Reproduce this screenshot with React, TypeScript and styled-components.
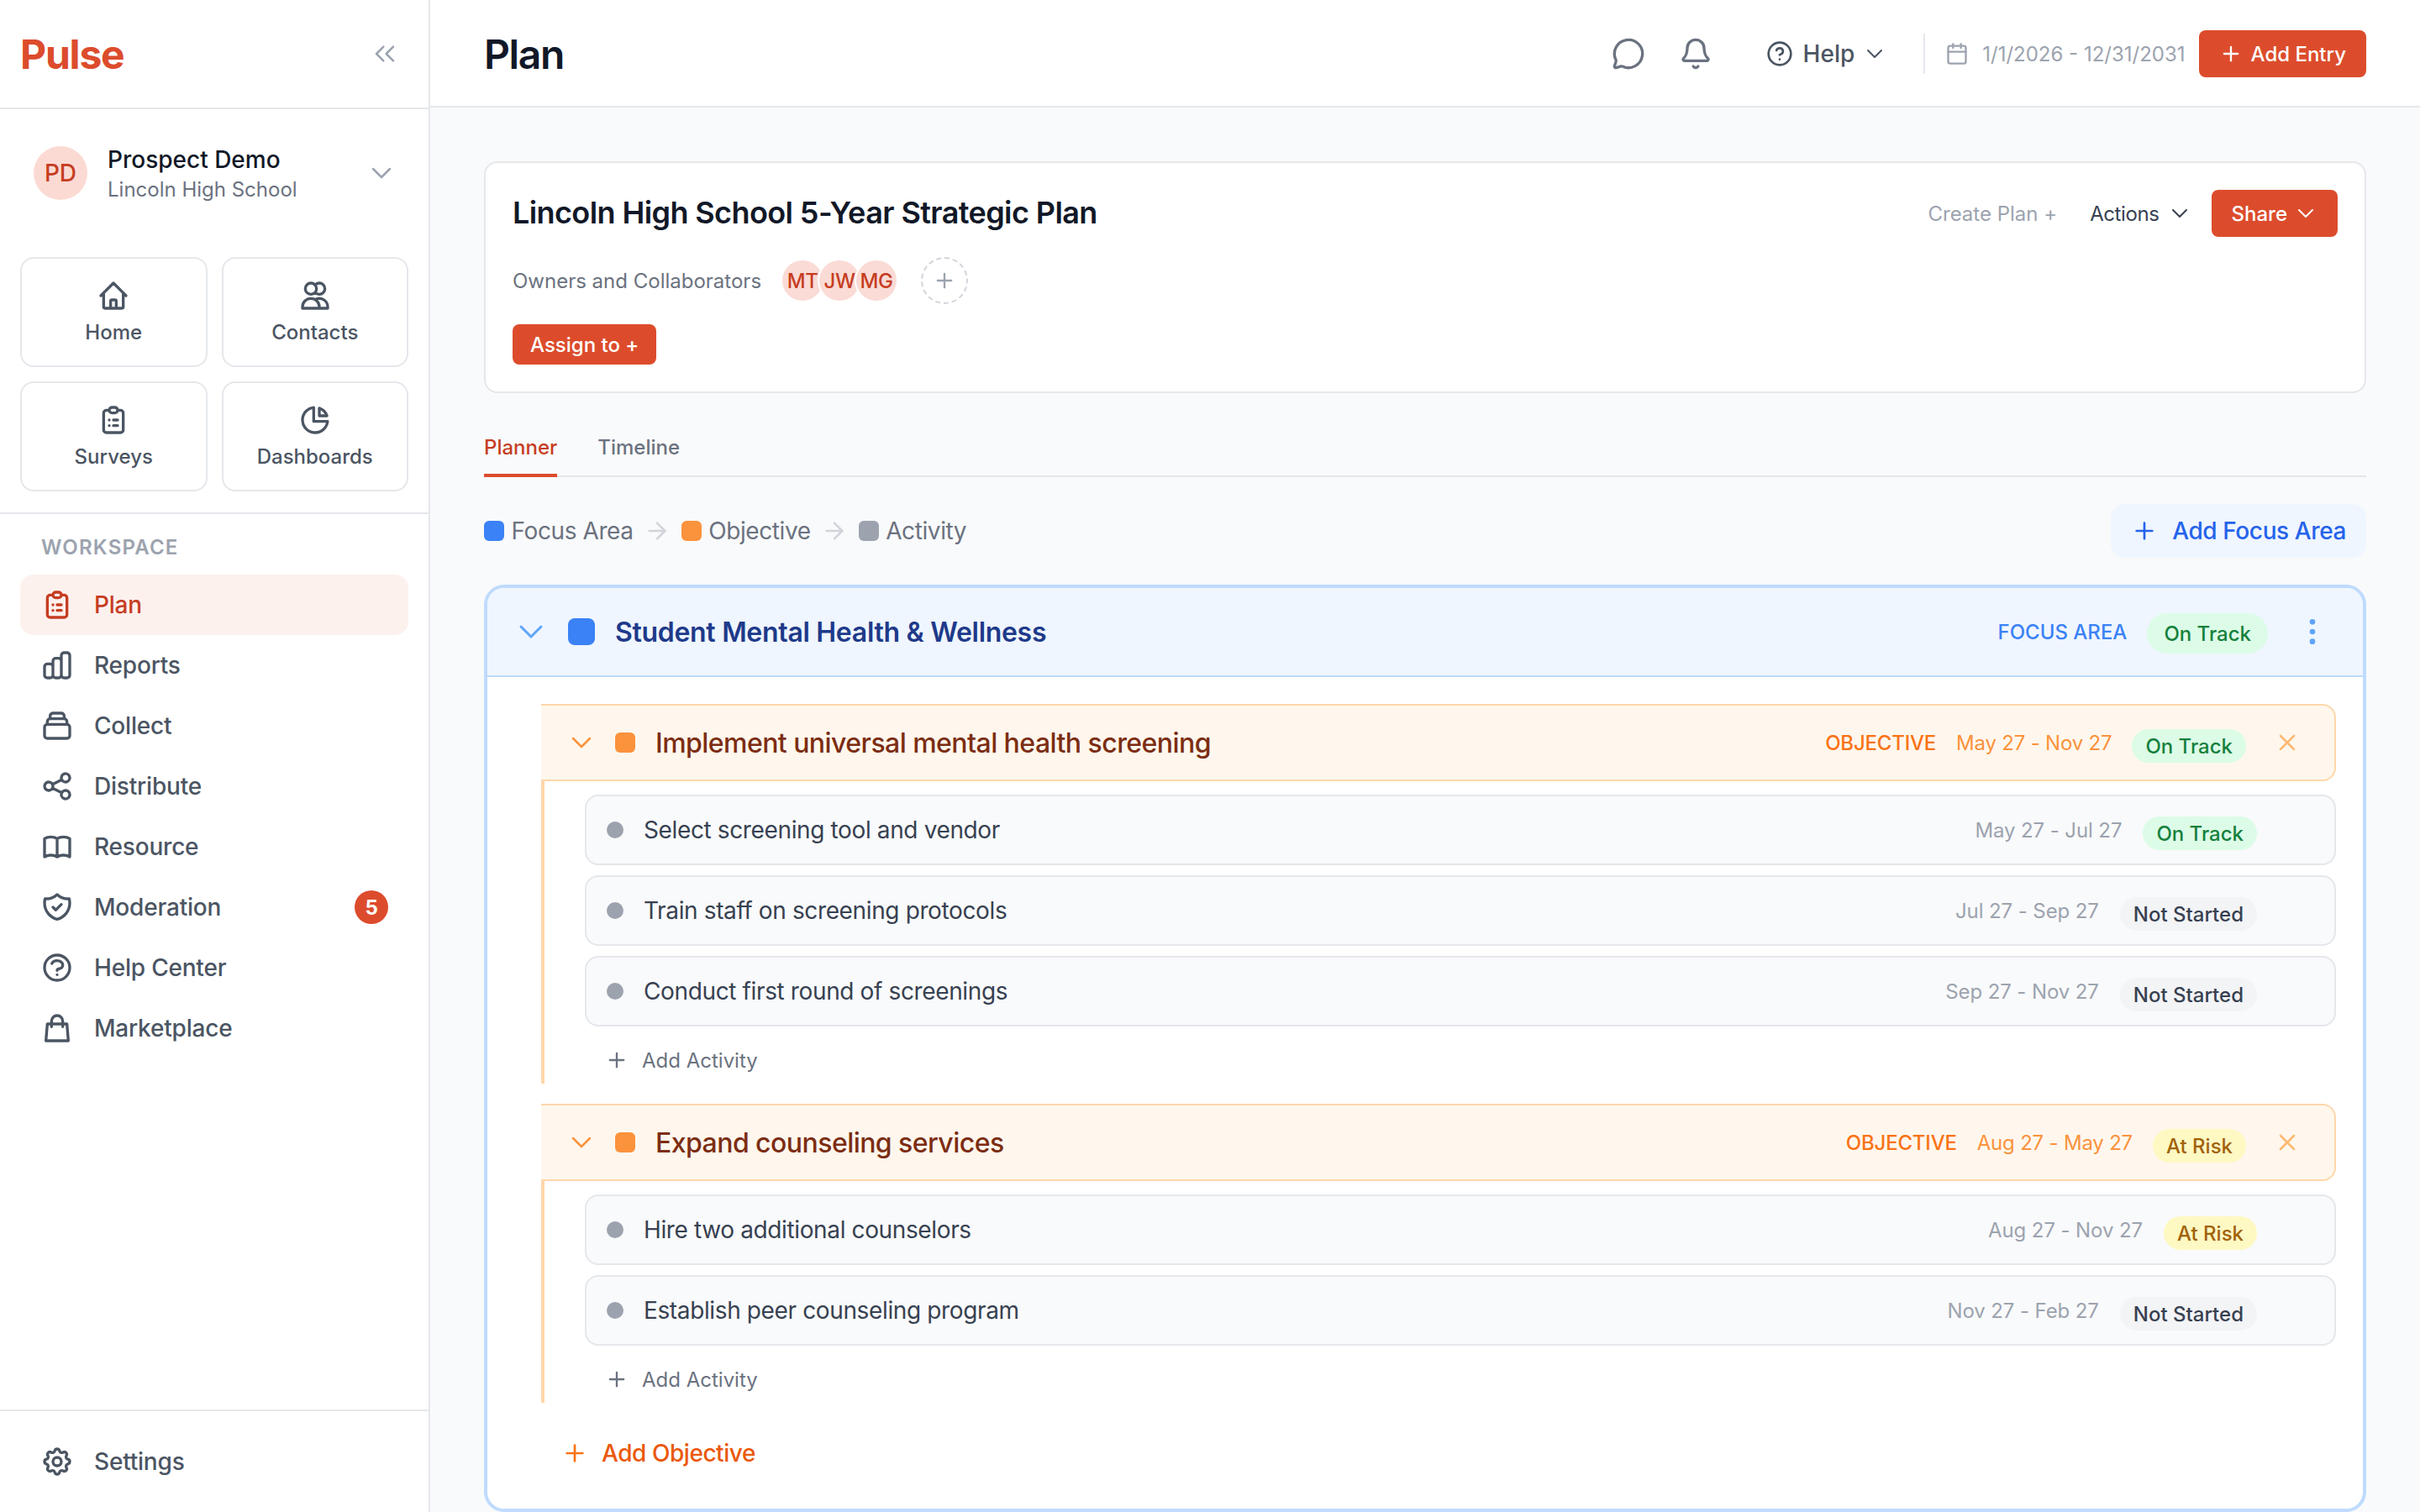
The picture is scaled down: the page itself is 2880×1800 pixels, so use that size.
import React, { FC } from "react"
import styled, { createGlobalStyle } from "styled-components"
import {
  ArrowRight,
  Bell,
  Calendar,
  ChevronDown,
  ChevronsLeft,
  CircleHelp,
  EllipsisVertical,
  MessageCircle,
  Plus,
  X,
} from "lucide-react"
import {
  HiOutlineBookOpen,
  HiOutlineChartBar,
  HiOutlineChartPie,
  HiOutlineClipboardList,
  HiOutlineCog,
  HiOutlineCollection,
  HiOutlineHome,
  HiOutlineQuestionMarkCircle,
  HiOutlineShare,
  HiOutlineShieldCheck,
  HiOutlineShoppingBag,
  HiOutlineUsers,
} from "react-icons/hi"

const colors = {
  brand: "#dc4c2c",
  brandText: "#c63d22",
  line: "#e5e7eb",
  ink: "#111827",
  body: "#374151",
  muted: "#4b5563",
  soft: "#6b7280",
  faint: "#9ca3af",
  blue: "#3b82f6",
  orange: "#fb923c",
}

const GlobalStyle = createGlobalStyle`
  html, body {
    margin: 0;
    padding: 0;
    background: #f9fafb;
  }
  body {
    font-family: Inter, "Liberation Sans", sans-serif;
    color: ${colors.ink};
  }
  * {
    box-sizing: border-box;
  }
  svg {
    flex-shrink: 0;
    display: block;
  }
  button {
    font-family: inherit;
    border: none;
    background: none;
    padding: 0;
  }
`

const Shell = styled.div`
  display: flex;
  width: 2880px;
  height: 1800px;
  overflow: hidden;
`

/* sidebar */

const Sidebar = styled.aside`
  display: flex;
  flex-direction: column;
  width: 512px;
  height: 100%;
  flex-shrink: 0;
  background: #fff;
  border-right: 2px solid ${colors.line};
`

const Brand = styled.div`
  display: flex;
  align-items: center;
  justify-content: space-between;
  height: 130px;
  padding: 0 32px 0 24px;
  border-bottom: 2px solid ${colors.line};
  color: ${colors.faint};
`

const Logo = styled.div`
  font-size: 48px;
  font-weight: 700;
  letter-spacing: -1.2px;
  color: ${colors.brand};
`

const Profile = styled.div`
  display: flex;
  align-items: center;
  padding: 42px 36px 66px 40px;
  color: ${colors.faint};
`

const ProfileAvatar = styled.div`
  display: flex;
  align-items: center;
  justify-content: center;
  width: 64px;
  height: 64px;
  border-radius: 50%;
  background: #fbdad3;
  color: ${colors.brandText};
  font-size: 28px;
  font-weight: 500;
`

const ProfileText = styled.div`
  flex: 1;
  margin-left: 24px;
`

const ProfileName = styled.div`
  font-size: 28px;
  font-weight: 500;
  line-height: 36px;
  color: ${colors.ink};
`

const ProfileOrg = styled.div`
  font-size: 24px;
  line-height: 32px;
  padding-top: 2px;
  margin-bottom: -2px;
  color: ${colors.soft};
`

const TileGrid = styled.div`
  display: grid;
  grid-template-columns: 1fr 1fr;
  gap: 17px;
  padding: 0 24px 25px;
  border-bottom: 2px solid ${colors.line};
`

const Tile = styled.div`
  display: flex;
  flex-direction: column;
  align-items: center;
  gap: 8px;
  height: 131px;
  padding-top: 24px;
  border: 2px solid ${colors.line};
  border-radius: 16px;
  color: ${colors.muted};
  font-size: 24px;
  font-weight: 500;
  line-height: 32px;
`

const SectionLabel = styled.div`
  padding: 24px 49px 0;
  margin-bottom: 16px;
  font-size: 24px;
  font-weight: 600;
  line-height: 32px;
  letter-spacing: 1.2px;
  color: ${colors.faint};
`

const NavList = styled.nav`
  display: flex;
  flex-direction: column;
  padding: 0 24px;
`

const NavRow = styled.div<{ $active?: boolean }>`
  display: flex;
  align-items: center;
  gap: 24px;
  height: 72px;
  padding: 0 24px;
  border-radius: 16px;
  font-size: 28px;
  font-weight: 500;
  letter-spacing: -0.2px;
  color: ${({ $active }) => ($active ? colors.brandText : colors.muted)};
  background: ${({ $active }) => ($active ? "#fdf1ee" : "transparent")};
`

const NavBadge = styled.span`
  display: flex;
  align-items: center;
  justify-content: center;
  width: 40px;
  height: 40px;
  margin-left: auto;
  border-radius: 50%;
  background: ${colors.brand};
  color: #fff;
  font-size: 24px;
  font-weight: 700;
`

const SidebarFooter = styled.div`
  margin-top: auto;
  padding: 24px;
  border-top: 2px solid ${colors.line};
`

/* main column */

const Main = styled.main`
  flex: 1;
  display: flex;
  flex-direction: column;
  min-width: 0;
  height: 100%;
`

const TopBar = styled.header`
  display: flex;
  align-items: center;
  justify-content: space-between;
  height: 128px;
  flex-shrink: 0;
  padding: 2px 64px 0;
  background: #fff;
  border-bottom: 2px solid ${colors.line};
`

const PageTitle = styled.h1`
  margin: 0;
  font-size: 48px;
  font-weight: 600;
  letter-spacing: -1.4px;
  color: ${colors.ink};
`

const TopActions = styled.div`
  display: flex;
  align-items: center;
  color: ${colors.soft};
`

const IconSlot = styled.div`
  display: flex;
  margin-right: 40px;
`

const HelpMenu = styled.div`
  display: flex;
  align-items: center;
  margin-left: 24px;
  font-size: 28px;
  font-weight: 500;
  color: ${colors.muted};
  svg:first-child {
    margin-right: 12px;
  }
  svg:last-child {
    margin-left: 8px;
  }
`

const Divider = styled.div`
  width: 2px;
  height: 48px;
  margin: 0 24px 0 42px;
  background: ${colors.line};
`

const DateRange = styled.div`
  display: flex;
  align-items: center;
  gap: 16px;
  margin-right: 16px;
  font-size: 24px;
  color: ${colors.faint};
`

const PrimaryButton = styled.button<{ $tall?: boolean }>`
  display: flex;
  align-items: center;
  height: ${({ $tall }) => ($tall ? "56px" : "48px")};
  border-radius: 8px;
  background: ${colors.brand};
  color: #fff;
  font-size: 24px;
  font-weight: 500;
  white-space: nowrap;
`

const AddEntryButton = styled(PrimaryButton)`
  gap: 10px;
  padding: 0 24px;
`

const ShareButton = styled(PrimaryButton)`
  gap: 6px;
  padding: 0 22px 0 24px;
`

const AssignButton = styled(PrimaryButton)`
  align-self: flex-start;
  padding: 0 21px;
`

const Content = styled.div`
  flex: 1;
  min-height: 0;
  display: flex;
  flex-direction: column;
  padding: 64px 64px 0;
`

const PlanCard = styled.section`
  display: flex;
  flex-direction: column;
  gap: 24px;
  height: 276px;
  flex-shrink: 0;
  padding: 32px;
  background: #fff;
  border: 2px solid ${colors.line};
  border-radius: 16px;
`

const PlanTop = styled.div`
  display: flex;
  align-items: center;
  justify-content: space-between;
`

const PlanName = styled.h2`
  margin: 0 0 2px;
  font-size: 36px;
  font-weight: 600;
  letter-spacing: -0.6px;
  color: ${colors.ink};
`

const PlanActions = styled.div`
  display: flex;
  align-items: center;
`

const PlanLink = styled.div<{ $strong?: boolean }>`
  display: flex;
  align-items: center;
  gap: 8px;
  padding: 0 22px 0 ${({ $strong }) => ($strong ? "17px" : "22px")};
  font-size: 24px;
  letter-spacing: ${({ $strong }) => ($strong ? "-0.4px" : "0")};
  color: ${({ $strong }) => ($strong ? colors.body : colors.faint)};
`

const OwnersRow = styled.div`
  display: flex;
  align-items: center;
  height: 56px;
`

const OwnersLabel = styled.span`
  margin-right: 25px;
  font-size: 24px;
  color: ${colors.soft};
`

const AvatarStack = styled.div`
  display: flex;
  margin-right: 29px;
`

const OwnerAvatar = styled.div`
  display: flex;
  align-items: center;
  justify-content: center;
  width: 48px;
  height: 48px;
  margin-right: -4px;
  border-radius: 50%;
  background: #fadbd5;
  box-shadow: 0 0 0 2px #fff;
  color: ${colors.brandText};
  font-size: 24px;
  font-weight: 500;
  letter-spacing: -0.4px;
  &:last-child {
    margin-right: 0;
  }
`

const AddOwner = styled.div`
  display: flex;
  align-items: center;
  justify-content: center;
  width: 56px;
  height: 56px;
  border: 2px dashed #d1d5db;
  border-radius: 50%;
  color: ${colors.faint};
`

const Tabs = styled.div`
  display: flex;
  gap: 48px;
  flex-shrink: 0;
  margin-top: 32px;
  border-bottom: 2px solid ${colors.line};
`

const Tab = styled.div<{ $active?: boolean }>`
  margin-bottom: -2px;
  padding: 17px 0 15px;
  font-size: 24px;
  font-weight: 500;
  line-height: 32px;
  color: ${({ $active }) => ($active ? colors.brandText : colors.soft)};
  border-bottom: 4px solid ${({ $active }) => ($active ? colors.brand : "transparent")};
`

const LegendBar = styled.div`
  display: flex;
  align-items: center;
  justify-content: space-between;
  height: 64px;
  flex-shrink: 0;
  margin-top: 32px;
`

const Legend = styled.div`
  display: flex;
  align-items: center;
  gap: 12.5px;
  color: #d1d5db;
`

const LegendItem = styled.div`
  display: flex;
  align-items: center;
  gap: 8.5px;
  font-size: 28px;
  letter-spacing: -0.4px;
  color: ${colors.soft};
`

const Swatch = styled.span<{ $color: string; $size: number }>`
  display: block;
  flex-shrink: 0;
  width: ${({ $size }) => $size}px;
  height: ${({ $size }) => $size}px;
  border-radius: ${({ $size }) => $size / 4}px;
  background: ${({ $color }) => $color};
`

const AddFocusButton = styled.button`
  display: flex;
  align-items: center;
  gap: 17px;
  height: 64px;
  padding: 0 24px;
  border-radius: 16px;
  background: #eff6ff;
  color: #2563eb;
  font-size: 28px;
  font-weight: 500;
  letter-spacing: -0.4px;
`

/* focus area block */

const FocusBlock = styled.section`
  flex: 1;
  min-height: 0;
  margin-top: 32px;
  background: #fff;
  border: 4px solid #bfdbfe;
  border-radius: 24px;
  overflow: hidden;
`

const FocusHeader = styled.div`
  display: flex;
  align-items: center;
  height: 106px;
  padding: 0 40px 0 28px;
  background: #eff6ff;
  border-bottom: 2px solid #bfdbfe;
`

const FocusTitle = styled.h3`
  flex: 1;
  margin: 0 0 0 24px;
  font-size: 32px;
  font-weight: 600;
  letter-spacing: -0.3px;
  color: #1e3a8a;
`

const FocusTag = styled.span`
  margin-right: 24px;
  font-size: 24px;
  font-weight: 500;
  color: ${colors.blue};
`

const FocusBody = styled.div`
  padding: 32px 32px 0 64px;
`

const Objective = styled.div`
  & + & {
    margin-top: 24px;
  }
`

const ObjectiveHeader = styled.div`
  display: flex;
  align-items: center;
  height: 92px;
  padding: 0 40px 0 28px;
  background: #fff7ed;
  border: 2px solid #fed7aa;
  border-left: none;
  border-radius: 0 16px 16px 0;
`

const ObjectiveTitle = styled.h4`
  flex: 1;
  margin: 0 0 0 24px;
  font-size: 32px;
  font-weight: 500;
  letter-spacing: -0.55px;
  color: #7c2d12;
`

const ObjectiveTag = styled.span`
  margin-right: 24px;
  font-size: 24px;
  font-weight: 500;
  letter-spacing: -0.2px;
  color: #f97316;
`

const ObjectiveDates = styled.span`
  margin-right: 24px;
  font-size: 24px;
  letter-spacing: -0.2px;
  color: ${colors.orange};
`

const ObjectiveBody = styled.div`
  display: flex;
  flex-direction: column;
  gap: 12px;
  padding: 16px 0 0 48px;
  border-left: 4px solid #fed7aa;
`

const ActivityRow = styled.div`
  display: flex;
  align-items: center;
  height: 84px;
  padding: 0 92px 0 24px;
  background: #f9fafb;
  border: 2px solid ${colors.line};
  border-radius: 16px;
`

const ActivityDot = styled.span`
  flex-shrink: 0;
  width: 20px;
  height: 20px;
  border-radius: 50%;
  background: ${colors.faint};
`

const ActivityName = styled.span`
  flex: 1;
  margin-left: 24px;
  font-size: 28px;
  letter-spacing: -0.37px;
  color: ${colors.body};
`

const ActivityDates = styled.span`
  margin-right: 25px;
  font-size: 24px;
  letter-spacing: -0.1px;
  color: ${colors.faint};
`

const AddActivity = styled.div`
  display: flex;
  align-items: center;
  gap: 16px;
  height: 56px;
  padding-left: 24px;
  font-size: 24px;
  color: ${colors.soft};
`

const AddObjective = styled.div`
  display: flex;
  align-items: center;
  gap: 16px;
  height: 56px;
  margin-top: 32px;
  padding-left: 24px;
  font-size: 28px;
  font-weight: 500;
  letter-spacing: -0.45px;
  color: #ea580c;
  svg {
    color: #f97316;
  }
`

type Status = "On Track" | "At Risk" | "Not Started"

const statusColors: Record<Status, { bg: string; fg: string }> = {
  "On Track": { bg: "#dcfce7", fg: "#15803d" },
  "At Risk": { bg: "#fef9c3", fg: "#a16207" },
  "Not Started": { bg: "#f3f4f6", fg: colors.body },
}

const Pill = styled.span<{ $status: Status; $large?: boolean }>`
  display: flex;
  align-items: center;
  height: ${({ $large }) => ($large ? "48px" : "40px")};
  margin-top: ${({ $large }) => ($large ? "4px" : "8px")};
  padding: 0 ${({ $large }) => ($large ? "20px" : "16px")};
  border-radius: 24px;
  font-size: 24px;
  font-weight: 500;
  white-space: nowrap;
  background: ${({ $status }) => statusColors[$status].bg};
  color: ${({ $status }) => statusColors[$status].fg};
`

const MoreSlot = styled.div`
  margin-left: 33px;
  color: #60a5fa;
`

const CloseSlot = styled.div`
  margin-left: 33px;
  color: #fdba74;
`

const FocusChevron = styled(ChevronDown)`
  margin-right: 20px;
  color: #60a5fa;
`

const ObjectiveChevron = styled(ChevronDown)`
  margin-right: 20px;
  color: ${colors.orange};
`

const tiles = [
  { label: "Home", Icon: HiOutlineHome },
  { label: "Contacts", Icon: HiOutlineUsers },
  { label: "Surveys", Icon: HiOutlineClipboardList },
  { label: "Dashboards", Icon: HiOutlineChartPie },
]

const navItems = [
  { label: "Plan", Icon: HiOutlineClipboardList, active: true },
  { label: "Reports", Icon: HiOutlineChartBar },
  { label: "Collect", Icon: HiOutlineCollection },
  { label: "Distribute", Icon: HiOutlineShare },
  { label: "Resource", Icon: HiOutlineBookOpen },
  { label: "Moderation", Icon: HiOutlineShieldCheck, badge: 5 },
  { label: "Help Center", Icon: HiOutlineQuestionMarkCircle },
  { label: "Marketplace", Icon: HiOutlineShoppingBag },
]

interface Activity {
  name: string
  dates: string
  status: Status
}

interface ObjectiveData {
  title: string
  dates: string
  status: Status
  activities: Activity[]
}

const objectives: ObjectiveData[] = [
  {
    title: "Implement universal mental health screening",
    dates: "May 27 - Nov 27",
    status: "On Track",
    activities: [
      { name: "Select screening tool and vendor", dates: "May 27 - Jul 27", status: "On Track" },
      { name: "Train staff on screening protocols", dates: "Jul 27 - Sep 27", status: "Not Started" },
      { name: "Conduct first round of screenings", dates: "Sep 27 - Nov 27", status: "Not Started" },
    ],
  },
  {
    title: "Expand counseling services",
    dates: "Aug 27 - May 27",
    status: "At Risk",
    activities: [
      { name: "Hire two additional counselors", dates: "Aug 27 - Nov 27", status: "At Risk" },
      { name: "Establish peer counseling program", dates: "Nov 27 - Feb 27", status: "Not Started" },
    ],
  },
]

const owners = ["MT", "JW", "MG"]

const SideNav: FC = () => (
  <Sidebar>
    <Brand>
      <Logo>Pulse</Logo>
      <ChevronsLeft size={40} strokeWidth={1.5} />
    </Brand>
    <Profile>
      <ProfileAvatar>PD</ProfileAvatar>
      <ProfileText>
        <ProfileName>Prospect Demo</ProfileName>
        <ProfileOrg>Lincoln High School</ProfileOrg>
      </ProfileText>
      <ChevronDown size={40} strokeWidth={1.5} />
    </Profile>
    <TileGrid>
      {tiles.map(({ label, Icon }) => (
        <Tile key={label}>
          <Icon size={40} />
          {label}
        </Tile>
      ))}
    </TileGrid>
    <SectionLabel>WORKSPACE</SectionLabel>
    <NavList>
      {navItems.map(({ label, Icon, active, badge }) => (
        <NavRow key={label} $active={active}>
          <Icon size={40} />
          {label}
          {badge ? <NavBadge>{badge}</NavBadge> : null}
        </NavRow>
      ))}
    </NavList>
    <SidebarFooter>
      <NavRow>
        <HiOutlineCog size={40} />
        Settings
      </NavRow>
    </SidebarFooter>
  </Sidebar>
)

const Header: FC = () => (
  <TopBar>
    <PageTitle>Plan</PageTitle>
    <TopActions>
      <IconSlot>
        <MessageCircle size={40} />
      </IconSlot>
      <IconSlot>
        <Bell size={40} />
      </IconSlot>
      <HelpMenu>
        <CircleHelp size={32} />
        Help
        <ChevronDown size={32} strokeWidth={1.5} />
      </HelpMenu>
      <Divider />
      <DateRange>
        <Calendar size={28} />
        1/1/2026 - 12/31/2031
      </DateRange>
      <AddEntryButton $tall>
        <Plus size={28} />
        Add Entry
      </AddEntryButton>
    </TopActions>
  </TopBar>
)

const ObjectiveGroup: FC<{ objective: ObjectiveData }> = ({ objective }) => (
  <Objective>
    <ObjectiveHeader>
      <ObjectiveChevron size={40} strokeWidth={1.5} />
      <Swatch $color={colors.orange} $size={24} />
      <ObjectiveTitle>{objective.title}</ObjectiveTitle>
      <ObjectiveTag>OBJECTIVE</ObjectiveTag>
      <ObjectiveDates>{objective.dates}</ObjectiveDates>
      <Pill $status={objective.status}>{objective.status}</Pill>
      <CloseSlot>
        <X size={32} />
      </CloseSlot>
    </ObjectiveHeader>
    <ObjectiveBody>
      {objective.activities.map((activity) => (
        <ActivityRow key={activity.name}>
          <ActivityDot />
          <ActivityName>{activity.name}</ActivityName>
          <ActivityDates>{activity.dates}</ActivityDates>
          <Pill $status={activity.status}>{activity.status}</Pill>
        </ActivityRow>
      ))}
      <AddActivity>
        <Plus size={28} />
        Add Activity
      </AddActivity>
    </ObjectiveBody>
  </Objective>
)

export default function App() {
  return (
    <Shell>
      <GlobalStyle />
      <SideNav />
      <Main>
        <Header />
        <Content>
          <PlanCard>
            <PlanTop>
              <PlanName>Lincoln High School 5-Year Strategic Plan</PlanName>
              <PlanActions>
                <PlanLink>Create Plan +</PlanLink>
                <PlanLink $strong>
                  Actions
                  <ChevronDown size={32} strokeWidth={1.5} />
                </PlanLink>
                <ShareButton $tall>
                  Share
                  <ChevronDown size={32} strokeWidth={1.5} />
                </ShareButton>
              </PlanActions>
            </PlanTop>
            <OwnersRow>
              <OwnersLabel>Owners and Collaborators</OwnersLabel>
              <AvatarStack>
                {owners.map((initials) => (
                  <OwnerAvatar key={initials}>{initials}</OwnerAvatar>
                ))}
              </AvatarStack>
              <AddOwner>
                <Plus size={28} />
              </AddOwner>
            </OwnersRow>
            <AssignButton>Assign to +</AssignButton>
          </PlanCard>
          <Tabs>
            <Tab $active>Planner</Tab>
            <Tab>Timeline</Tab>
          </Tabs>
          <LegendBar>
            <Legend>
              <LegendItem>
                <Swatch $color={colors.blue} $size={24} />
                Focus Area
              </LegendItem>
              <ArrowRight size={32} />
              <LegendItem>
                <Swatch $color={colors.orange} $size={24} />
                Objective
              </LegendItem>
              <ArrowRight size={32} />
              <LegendItem>
                <Swatch $color={colors.faint} $size={24} />
                Activity
              </LegendItem>
            </Legend>
            <AddFocusButton>
              <Plus size={32} />
              Add Focus Area
            </AddFocusButton>
          </LegendBar>
          <FocusBlock>
            <FocusHeader>
              <FocusChevron size={48} strokeWidth={1.5} />
              <Swatch $color={colors.blue} $size={32} />
              <FocusTitle>Student Mental Health &amp; Wellness</FocusTitle>
              <FocusTag>FOCUS AREA</FocusTag>
              <Pill $status="On Track" $large>
                On Track
              </Pill>
              <MoreSlot>
                <EllipsisVertical size={40} />
              </MoreSlot>
            </FocusHeader>
            <FocusBody>
              {objectives.map((objective) => (
                <ObjectiveGroup key={objective.title} objective={objective} />
              ))}
              <AddObjective>
                <Plus size={32} />
                Add Objective
              </AddObjective>
            </FocusBody>
          </FocusBlock>
        </Content>
      </Main>
    </Shell>
  )
}
